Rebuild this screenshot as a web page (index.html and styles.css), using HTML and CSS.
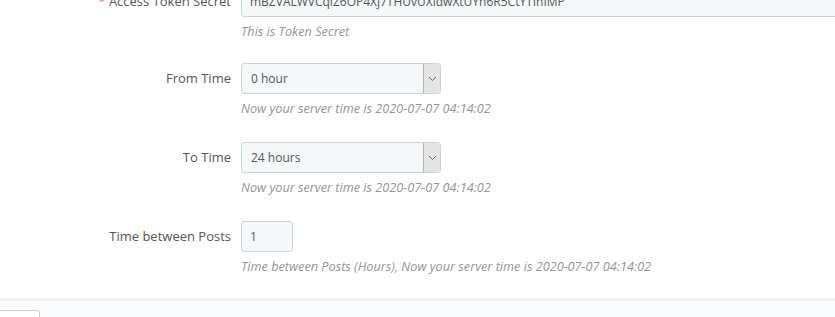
FILE: index.html
```html
<!DOCTYPE html>
<html lang="en">
<head>
    <meta charset="UTF-8">
    <title>Settings</title>
    <link rel="stylesheet" href="styles.css">
</head>
<body>
    <div class="panel">
        <div class="form-wrapper">
            <div class="form-group form-group-first">
                <label class="control-label"><span class="required">*</span> Access Token Secret</label>
                <div class="control">
                    <input type="text" class="input-wide" value="mBZVALWVCqlZ6OP4Xj7THUvUXldwXtUYn6R5CtYTInIMP">
                    <p class="help-block">This is Token Secret</p>
                </div>
            </div>

            <div class="form-group">
                <label class="control-label">From Time</label>
                <div class="control">
                    <div class="select-box">
                        <span class="select-value">0 hour</span>
                        <span class="select-arrow">
                            <svg width="9" height="6" viewBox="0 0 9 6"><path d="M1 1l3.5 3.5L8 1" fill="none" stroke="#666" stroke-width="1"/></svg>
                        </span>
                    </div>
                    <p class="help-block">Now your server time is 2020-07-07 04:14:02</p>
                </div>
            </div>

            <div class="form-group">
                <label class="control-label">To Time</label>
                <div class="control">
                    <div class="select-box">
                        <span class="select-value">24 hours</span>
                        <span class="select-arrow">
                            <svg width="9" height="6" viewBox="0 0 9 6"><path d="M1 1l3.5 3.5L8 1" fill="none" stroke="#666" stroke-width="1"/></svg>
                        </span>
                    </div>
                    <p class="help-block">Now your server time is 2020-07-07 04:14:02</p>
                </div>
            </div>

            <div class="form-group">
                <label class="control-label">Time between Posts</label>
                <div class="control">
                    <input type="text" class="input-small" value="1">
                    <p class="help-block">Time between Posts (Hours), Now your server time is 2020-07-07 04:14:02</p>
                </div>
            </div>
        </div>

        <div class="panel-footer">
            <button class="btn">&nbsp;</button>
        </div>
    </div>
</body>
</html>
```

FILE: styles.css
```css
body {
    margin: 0;
    font-family: "Open Sans", "Liberation Sans", sans-serif;
    font-size: 12px;
    color: #555;
    background-color: #fff;
    overflow: hidden;
}

.form-wrapper {
    margin-top: -14px;
}

.form-group {
    display: flex;
    margin-bottom: 25px;
}

.form-group-first {
    margin-bottom: 23px;
}

.control-label {
    width: 231px;
    flex-shrink: 0;
    margin-right: 10px;
    text-align: right;
    font-size: 13px;
    line-height: 31px;
    color: #555;
}

.required {
    color: #e54d59;
}

.control {
    flex: 1;
}

input {
    box-sizing: border-box;
    display: block;
    height: 31px;
    padding: 0 8px;
    border: 1px solid #c7d6db;
    border-radius: 3px;
    background-color: #f5f8f9;
    font-family: inherit;
    font-size: 12px;
    color: #555;
}

.input-wide {
    width: 610px;
}

.input-small {
    width: 52px;
}

.select-box {
    box-sizing: border-box;
    width: 200px;
    height: 31px;
    display: flex;
    align-items: center;
    overflow: hidden;
    border: 1px solid #c7d6db;
    border-radius: 3px;
    background-color: #f5f8f9;
}

.select-value {
    flex: 1;
    padding-left: 9px;
    font-size: 12px;
    color: #555;
}

.select-arrow {
    width: 16px;
    height: 29px;
    display: flex;
    align-items: center;
    justify-content: center;
    background-color: #e4e4e4;
    border-left: 1px solid #b5b5b5;
}

.help-block {
    margin: 5px 0 0;
    font-size: 12.7px;
    line-height: 18px;
    font-style: italic;
    color: #959595;
}

.panel-footer {
    margin-top: -1px;
    padding: 10px 0;
    border-top: 1px solid #e3e6e8;
    background-color: #fafbfc;
}

.btn {
    width: 50px;
    height: 30px;
    margin-left: -10px;
    border: 1px solid #ccc;
    border-radius: 3px;
    background-color: #fff;
}
```
